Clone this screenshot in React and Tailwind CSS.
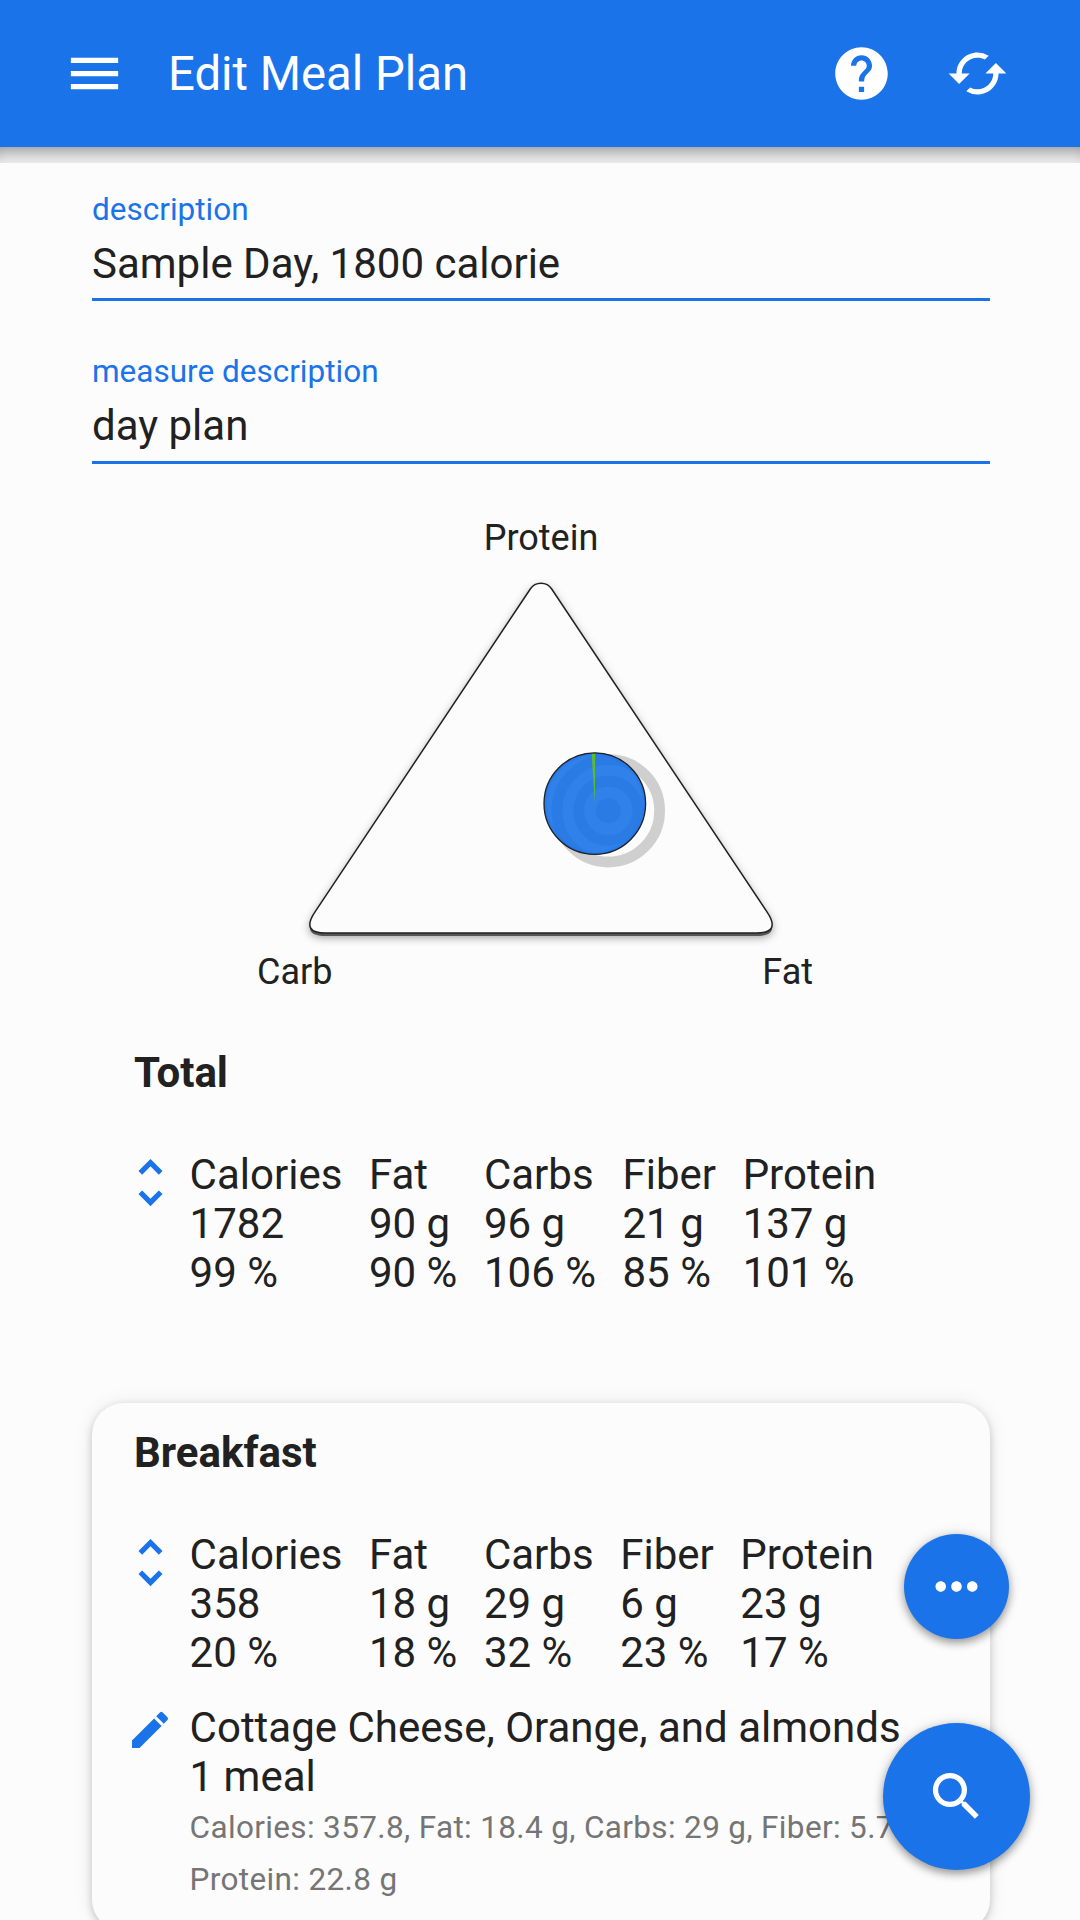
import React from 'react';
import {
  MdMenu,
  MdHelp,
  MdCached,
  MdUnfoldMore,
  MdEdit,
  MdMoreHoriz,
  MdSearch,
} from 'react-icons/md';

const totals = [
  { name: 'Calories', amount: '1782', percent: '99 %' },
  { name: 'Fat', amount: '90 g', percent: '90 %' },
  { name: 'Carbs', amount: '96 g', percent: '106 %' },
  { name: 'Fiber', amount: '21 g', percent: '85 %' },
  { name: 'Protein', amount: '137 g', percent: '101 %' },
];

const breakfast = {
  name: 'Breakfast',
  nutrients: [
    { name: 'Calories', amount: '358', percent: '20 %' },
    { name: 'Fat', amount: '18 g', percent: '18 %' },
    { name: 'Carbs', amount: '29 g', percent: '32 %' },
    { name: 'Fiber', amount: '6 g', percent: '23 %' },
    { name: 'Protein', amount: '23 g', percent: '17 %' },
  ],
  items: [
    {
      name: 'Cottage Cheese, Orange, and almonds',
      measure: '1 meal',
      detail: 'Calories: 357.8, Fat: 18.4 g, Carbs: 29 g, Fiber: 5.7 g, Protein: 22.8 g',
    },
  ],
};

const Header = () => (
  <header>
    <div className="h-[147px] bg-[#1b73e9] text-white flex items-center pl-[63px] pr-[71px]">
      <MdMenu size={63} className="shrink-0" />
      <h1 className="ml-[42px] pt-0.5 text-[47.25px] leading-none">Edit Meal Plan</h1>
      <div className="ml-auto flex items-center gap-[53px]">
        <MdHelp size={63} />
        <MdCached size={63} />
      </div>
    </div>
    <div className="h-4 bg-linear-to-b from-[#b3b3b3] to-[#f3f3f3] shadow-[inset_0_0_8px_rgba(0,0,0,0.08)]" />
  </header>
);

const Field = ({ label, value }) => (
  <div className="border-b-3 border-[#1b73e9] pb-[10.4px]">
    <div className="pt-px text-[31.5px] leading-9 text-[#1b73e9]">{label}</div>
    <div className="mt-[11px] text-[42px] leading-[49px]">{value}</div>
  </div>
);

const MacroTriangle = () => (
  <div className="mt-[52px] text-[36px] leading-[44px]">
    <div className="text-center pl-0.5">Protein</div>
    <svg width="1080" height="390" viewBox="0 560 1080 390" className="block">
      <defs>
        <filter id="triangleShadow" x="-10%" y="-10%" width="120%" height="120%">
          <feDropShadow dx="0" dy="1" stdDeviation="5" floodColor="#000" floodOpacity="0.42" />
        </filter>
        <radialGradient id="pieEdge">
          <stop offset="0.92" stopColor="#1b73e9" stopOpacity="0" />
          <stop offset="1" stopColor="#1b73e9" stopOpacity="0.7" />
        </radialGradient>
        <clipPath id="pieClip">
          <circle cx="594.8" cy="803.6" r="50.8" />
        </clipPath>
      </defs>

      {/* Triangle */}
      <path
        d="M530.3 592 A12.8 12.8 0 0 1 551.7 592 L767.3 915.4 Q781 936 756.3 936 L325.7 936 Q301 936 314.7 915.4 Z"
        fill="#555"
        filter="url(#triangleShadow)"
      />
      <path
        d="M530.3 589 A12.8 12.8 0 0 1 551.7 589 L767.3 912.4 Q781 933 756.3 933 L325.7 933 Q301 933 314.7 912.4 Z"
        fill="#fcfcfc"
        stroke="#212121"
        strokeWidth="1.5"
      />

      {/* Pie with its rippled shadow */}
      <circle cx="608.3" cy="810.7" r="51.3" fill="none" stroke="#cfcfcf" strokeWidth="10.8" />
      <circle cx="594.8" cy="803.6" r="50.8" fill="#3081ea" />
      <g clipPath="url(#pieClip)" fill="none" stroke="#2b7be5">
        <circle cx="608.3" cy="810.7" r="51.3" strokeWidth="10.8" />
        <circle cx="608.3" cy="810.7" r="29.7" strokeWidth="10.8" />
        <circle cx="608.3" cy="810.7" r="12.4" fill="#2b7be5" stroke="none" />
      </g>
      <circle cx="594.8" cy="803.6" r="50.8" fill="url(#pieEdge)" />
      <path d="M594.8 803.6 L591.6 753 L595.2 753 Z" fill="#5bbd2b" />
      <circle cx="594.8" cy="803.6" r="50.8" fill="none" stroke="#212121" strokeWidth="1.3" />
    </svg>
    <div className="flex justify-between pl-[257px] pr-[267px]">
      <span>Carb</span>
      <span>Fat</span>
    </div>
  </div>
);

const NutrientTable = ({ nutrients }) => (
  <div className="mt-[53px] pl-[27px] flex items-start gap-[7.6px]">
    <MdUnfoldMore size={63} className="shrink-0 mt-px text-[#1b73e9]" />
    <div className="flex gap-[26.6px]">
      {nutrients.map(nutrient => (
        <div key={nutrient.name} className="whitespace-nowrap">
          <div>{nutrient.name}</div>
          <div>{nutrient.amount}</div>
          <div>{nutrient.percent}</div>
        </div>
      ))}
    </div>
  </div>
);

const MealItem = ({ item }) => (
  <div className="mt-[26px] pl-[27px] pr-[26px] flex items-start gap-[7.6px]">
    <div className="w-[63px] shrink-0 pt-[3.5px] pr-0.5 flex justify-center text-[#1b73e9]">
      <MdEdit size={48} />
    </div>
    <div>
      <div>{item.name}</div>
      <div>{item.measure}</div>
      <div className="pt-px text-[31.5px] leading-[52px] tracking-[0.35px] text-[#757575]">{item.detail}</div>
    </div>
  </div>
);

const App = () => {
  return (
    <div className="relative w-[1080px] h-[1920px] overflow-hidden bg-[#fcfcfc] text-[#212121] font-[Roboto,sans-serif]">
      <Header />

      <main className="text-[42px] leading-[49px]">
        <div className="mx-[92px] w-[898px] pt-7 flex flex-col gap-[52.1px]">
          <Field label="description" value="Sample Day, 1800 calorie" />
          <Field label="measure description" value="day plan" />
        </div>

        <MacroTriangle />

        <section className="mt-[54px] mx-[92px]">
          <h2 className="pl-[42px] font-bold">Total</h2>
          <NutrientTable nutrients={totals} />
        </section>

        <section className="mt-[106px] mx-[92px] w-[898px] pt-[25px] pb-[25px] rounded-[31.5px] bg-[#fcfcfc] shadow-[0_3px_8px_rgba(0,0,0,0.2),0_0_22px_rgba(0,0,0,0.07)]">
          <h2 className="pl-[42px] font-bold">{breakfast.name}</h2>
          <NutrientTable nutrients={breakfast.nutrients} />
          {breakfast.items.map(item => (
            <MealItem key={item.name} item={item} />
          ))}
        </section>
      </main>

      {/* Floating action buttons */}
      <div className="absolute right-[50px] bottom-[50px] flex flex-col items-center gap-[84px] text-white">
        <button className="w-[105px] h-[105px] rounded-full bg-[#1b73e9] flex items-center justify-center shadow-[0_4px_8px_rgba(0,0,0,0.35),0_0_14px_rgba(0,0,0,0.12)]">
          <MdMoreHoriz size={63} />
        </button>
        <button className="w-[147px] h-[147px] rounded-full bg-[#1b73e9] flex items-center justify-center shadow-[0_4px_8px_rgba(0,0,0,0.35),0_0_14px_rgba(0,0,0,0.12)]">
          <MdSearch size={63} />
        </button>
      </div>
    </div>
  );
};

export default App;
